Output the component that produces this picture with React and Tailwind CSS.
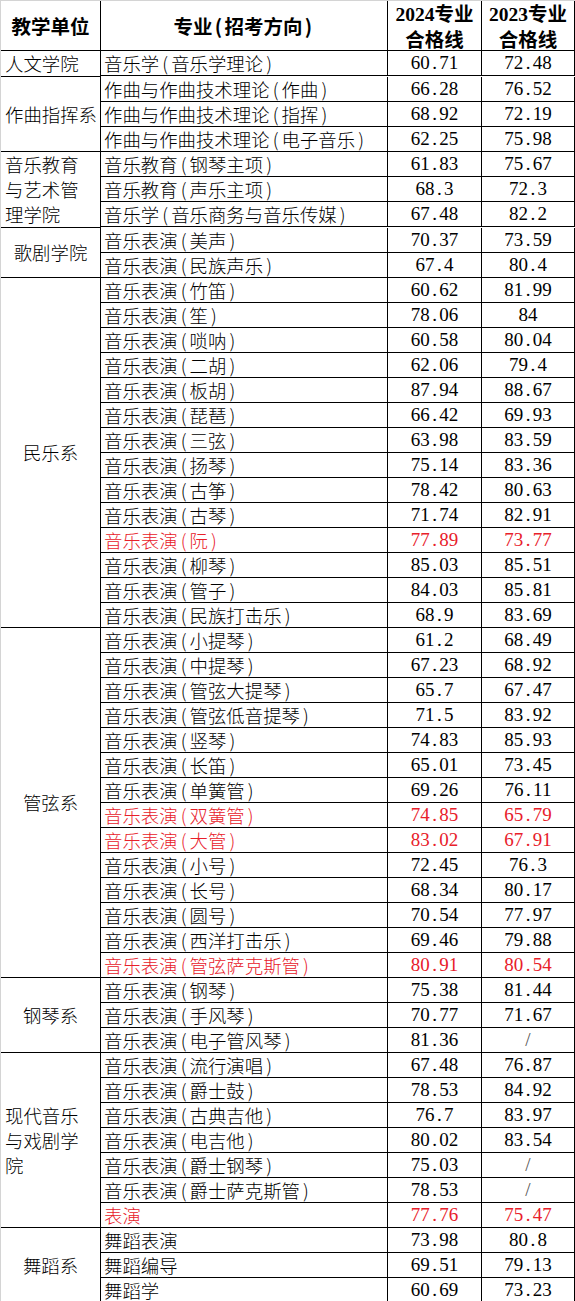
import React from "react";

const groups = [
  { name: ["人文学院"], align: "left", rows: [["音乐学(音乐学理论)", "60.71", "72.48"]] },
  {
    name: ["作曲指挥系"],
    align: "left",
    rows: [
      ["作曲与作曲技术理论(作曲)", "66.28", "76.52"],
      ["作曲与作曲技术理论(指挥)", "68.92", "72.19"],
      ["作曲与作曲技术理论(电子音乐)", "62.25", "75.98"],
    ],
  },
  {
    name: ["音乐教育", "与艺术管", "理学院"],
    align: "left",
    rows: [
      ["音乐教育(钢琴主项)", "61.83", "75.67"],
      ["音乐教育(声乐主项)", "68.3", "72.3"],
      ["音乐学(音乐商务与音乐传媒)", "67.48", "82.2"],
    ],
  },
  {
    name: ["歌剧学院"],
    align: "center",
    rows: [
      ["音乐表演(美声)", "70.37", "73.59"],
      ["音乐表演(民族声乐)", "67.4", "80.4"],
    ],
  },
  {
    name: ["民乐系"],
    align: "center",
    rows: [
      ["音乐表演(竹笛)", "60.62", "81.99"],
      ["音乐表演(笙)", "78.06", "84"],
      ["音乐表演(唢呐)", "60.58", "80.04"],
      ["音乐表演(二胡)", "62.06", "79.4"],
      ["音乐表演(板胡)", "87.94", "88.67"],
      ["音乐表演(琵琶)", "66.42", "69.93"],
      ["音乐表演(三弦)", "63.98", "83.59"],
      ["音乐表演(扬琴)", "75.14", "83.36"],
      ["音乐表演(古筝)", "78.42", "80.63"],
      ["音乐表演(古琴)", "71.74", "82.91"],
      ["音乐表演(阮)", "77.89", "73.77", true],
      ["音乐表演(柳琴)", "85.03", "85.51"],
      ["音乐表演(管子)", "84.03", "85.81"],
      ["音乐表演(民族打击乐)", "68.9", "83.69"],
    ],
  },
  {
    name: ["管弦系"],
    align: "center",
    rows: [
      ["音乐表演(小提琴)", "61.2", "68.49"],
      ["音乐表演(中提琴)", "67.23", "68.92"],
      ["音乐表演(管弦大提琴)", "65.7", "67.47"],
      ["音乐表演(管弦低音提琴)", "71.5", "83.92"],
      ["音乐表演(竖琴)", "74.83", "85.93"],
      ["音乐表演(长笛)", "65.01", "73.45"],
      ["音乐表演(单簧管)", "69.26", "76.11"],
      ["音乐表演(双簧管)", "74.85", "65.79", true],
      ["音乐表演(大管)", "83.02", "67.91", true],
      ["音乐表演(小号)", "72.45", "76.3"],
      ["音乐表演(长号)", "68.34", "80.17"],
      ["音乐表演(圆号)", "70.54", "77.97"],
      ["音乐表演(西洋打击乐)", "69.46", "79.88"],
      ["音乐表演(管弦萨克斯管)", "80.91", "80.54", true],
    ],
  },
  {
    name: ["钢琴系"],
    align: "center",
    rows: [
      ["音乐表演(钢琴)", "75.38", "81.44"],
      ["音乐表演(手风琴)", "70.77", "71.67"],
      ["音乐表演(电子管风琴)", "81.36", "/"],
    ],
  },
  {
    name: ["现代音乐", "与戏剧学", "院"],
    align: "left",
    rows: [
      ["音乐表演(流行演唱)", "67.48", "76.87"],
      ["音乐表演(爵士鼓)", "78.53", "84.92"],
      ["音乐表演(古典吉他)", "76.7", "83.97"],
      ["音乐表演(电吉他)", "80.02", "83.54"],
      ["音乐表演(爵士钢琴)", "75.03", "/"],
      ["音乐表演(爵士萨克斯管)", "78.53", "/"],
      ["表演", "77.76", "75.47", true],
    ],
  },
  {
    name: ["舞蹈系"],
    align: "center",
    rows: [
      ["舞蹈表演", "73.98", "80.8"],
      ["舞蹈编导", "69.51", "79.13"],
      ["舞蹈学", "60.69", "73.23"],
    ],
  },
];

function CJK({ s }) {
  const parts = s.split(/([()])/);
  return (
    <>
      {parts.map((p, i) =>
        p === "(" || p === ")" ? (
          <span key={i} className="inline-block w-[12px] text-center">
            {p}
          </span>
        ) : (
          <span key={i}>{p}</span>
        )
      )}
    </>
  );
}

function Num({ v }) {
  if (v === "/") {
    return <span className="text-[#555]">/</span>;
  }
  const [a, b] = v.split(".");
  return (
    <span>
      {a}
      {b !== undefined && (
        <>
          <span className="inline-block w-[9.5px] text-center">.</span>
          {b}
        </>
      )}
    </span>
  );
}

export default function App() {
  return (
    <div className="w-[575px] bg-white text-black border-t border-l border-[#d4d4d4] font-['Noto_Sans_CJK_SC',sans-serif]">
      {/* header */}
      <div className="flex h-[50px] border-b border-black font-bold text-[19.5px] leading-[24px]">
        <div className="w-[100px] shrink-0 border-r border-black flex items-center justify-center">
          教学单位
        </div>
        <div className="w-[287px] shrink-0 border-r border-black flex items-center justify-center">
          <CJK s="专业(招考方向)" />
        </div>
        <div className="w-[94px] shrink-0 border-r border-black flex flex-col items-center justify-center">
          <div>
            <span className="font-['Liberation_Serif',serif]">2024</span>专业
          </div>
          <div>合格线</div>
        </div>
        <div className="w-[93px] shrink-0 border-r border-black flex flex-col items-center justify-center">
          <div>
            <span className="font-['Liberation_Serif',serif]">2023</span>专业
          </div>
          <div>合格线</div>
        </div>
      </div>

      {groups.map((g, gi) => (
        <div key={gi} className="flex">
          <div
            className={
              g.align === "left"
                ? "w-[100px] shrink-0 border-r border-b border-black flex flex-col justify-center items-start pl-[4px] text-[18.4px] leading-[25px] font-light"
                : "w-[100px] shrink-0 border-r border-b border-black flex flex-col justify-center items-center text-[18.4px] leading-[25px] font-light"
            }
          >
            {g.name.map((n, ni) => (
              <div key={ni} className="whitespace-nowrap">
                {n}
              </div>
            ))}
          </div>
          <div className="flex flex-col">
            {g.rows.map((r, ri) => (
              <div
                key={ri}
                className={
                  r[3]
                    ? "flex h-[25px] border-b border-black text-[#e8202a]"
                    : "flex h-[25px] border-b border-black"
                }
              >
                <div className="w-[287px] shrink-0 border-r border-black flex items-center pl-[3px] text-[18.4px] leading-[24px] whitespace-nowrap font-light">
                  <CJK s={r[0]} />
                </div>
                <div className="w-[94px] shrink-0 border-r border-black flex items-center justify-center font-['Liberation_Serif',serif] text-[19px] leading-[24px]">
                  <Num v={r[1]} />
                </div>
                <div className="w-[93px] shrink-0 border-r border-black flex items-center justify-center font-['Liberation_Serif',serif] text-[19px] leading-[24px]">
                  <Num v={r[2]} />
                </div>
              </div>
            ))}
          </div>
        </div>
      ))}
    </div>
  );
}
